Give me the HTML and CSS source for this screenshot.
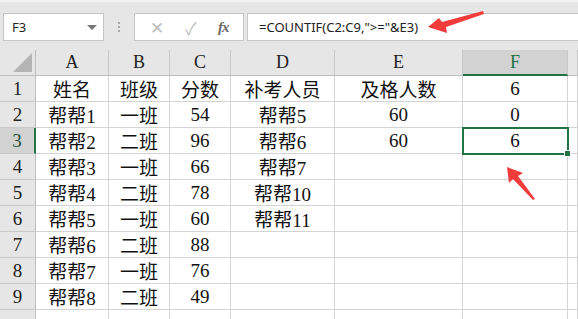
FILE: index.html
```html
<!DOCTYPE html>
<html lang="zh-CN">

<head>
    <meta charset="UTF-8">
    <title>COUNTIF</title>
    <link rel="stylesheet" href="styles.css">
</head>

<body>

    <!-- Barra de fórmulas -->
    <div class="barra">
        <div class="nombre">
            <span>F3</span>
            <span class="flecha"></span>
        </div>
        <div class="puntos"><i></i><i></i><i></i></div>
        <div class="botones">
            <span class="btn-x">✕</span>
            <span class="btn-ok">✓</span>
            <span class="btn-fx">fx</span>
        </div>
        <div class="formula">=COUNTIF(C2:C9,"&gt;="&amp;E3)</div>
    </div>

    <!-- Hoja -->
    <div class="hoja">
        <div class="esquina"><span class="triangulo"></span></div>
        <div class="col">A</div>
        <div class="col">B</div>
        <div class="col">C</div>
        <div class="col">D</div>
        <div class="col">E</div>
        <div class="col activa">F</div>
        <div class="col"></div>

        <div class="fila">1</div>
        <div class="celda">姓名</div><div class="celda">班级</div><div class="celda">分数</div><div class="celda">补考人员</div><div class="celda">及格人数</div><div class="celda">6</div><div class="celda"></div>

        <div class="fila">2</div>
        <div class="celda">帮帮1</div><div class="celda">一班</div><div class="celda">54</div><div class="celda">帮帮5</div><div class="celda">60</div><div class="celda">0</div><div class="celda"></div>

        <div class="fila activa">3</div>
        <div class="celda">帮帮2</div><div class="celda">二班</div><div class="celda">96</div><div class="celda">帮帮6</div><div class="celda">60</div><div class="celda seleccion">6<span class="asa"></span></div><div class="celda"></div>

        <div class="fila">4</div>
        <div class="celda">帮帮3</div><div class="celda">一班</div><div class="celda">66</div><div class="celda">帮帮7</div><div class="celda"></div><div class="celda"></div><div class="celda"></div>

        <div class="fila">5</div>
        <div class="celda">帮帮4</div><div class="celda">二班</div><div class="celda">78</div><div class="celda">帮帮10</div><div class="celda"></div><div class="celda"></div><div class="celda"></div>

        <div class="fila">6</div>
        <div class="celda">帮帮5</div><div class="celda">一班</div><div class="celda">60</div><div class="celda">帮帮11</div><div class="celda"></div><div class="celda"></div><div class="celda"></div>

        <div class="fila">7</div>
        <div class="celda">帮帮6</div><div class="celda">二班</div><div class="celda">88</div><div class="celda"></div><div class="celda"></div><div class="celda"></div><div class="celda"></div>

        <div class="fila">8</div>
        <div class="celda">帮帮7</div><div class="celda">一班</div><div class="celda">76</div><div class="celda"></div><div class="celda"></div><div class="celda"></div><div class="celda"></div>

        <div class="fila">9</div>
        <div class="celda">帮帮8</div><div class="celda">二班</div><div class="celda">49</div><div class="celda"></div><div class="celda"></div><div class="celda"></div><div class="celda"></div>

        <div class="fila ultima"></div>
        <div class="celda ultima"></div><div class="celda ultima"></div><div class="celda ultima"></div><div class="celda ultima"></div><div class="celda ultima"></div><div class="celda ultima"></div><div class="celda ultima"></div>
    </div>

    <!-- Flechas rojas -->
    <svg class="flechas" width="578" height="319" viewBox="0 0 578 319">
        <polygon points="428,27 439,18 442,22 483,11 484,14 446,27 447,33" fill="#f23b3b" />
        <polygon points="507,167 523,173 518,176 535,199 533,200 513,179 509,183" fill="#f23b3b" />
    </svg>

</body>

</html>
```

FILE: styles.css
```css
html {
    overflow: hidden;
}

body {
    margin: 0;
    width: 578px;
    height: 319px;
    overflow: hidden;
    background-color: #fff;
    font-family: "Liberation Serif", "Noto Sans CJK SC", serif;
}

/* Barra de fórmulas */
.barra {
    display: flex;
    align-items: center;
    height: 50px;
    padding: 0 0 0 3px;
    box-sizing: border-box;
    background-color: #e6e6e6;
    border-top: 2px solid #f3f3f3;
    font-family: "Noto Sans", "Liberation Sans", sans-serif;
    color: #222;
}

.nombre {
    display: flex;
    align-items: center;
    justify-content: space-between;
    width: 101px;
    height: 28px;
    margin-top: 2px;
    padding: 0 6px 0 8px;
    box-sizing: border-box;
    background-color: #fff;
    border: 1px solid #c6c6c6;
    font-size: 13px;
}

.flecha {
    width: 0;
    height: 0;
    border-left: 5px solid transparent;
    border-right: 5px solid transparent;
    border-top: 5px solid #777;
}

.puntos {
    display: flex;
    flex-direction: column;
    gap: 2px;
    margin: 2px 14px 0 14px;
}

.puntos i {
    display: block;
    width: 2px;
    height: 2px;
    background-color: #a8a8a8;
}

.botones {
    display: flex;
    align-items: center;
    justify-content: space-around;
    width: 110px;
    height: 28px;
    margin-top: 2px;
    box-sizing: border-box;
    background-color: #fff;
    border: 1px solid #c6c6c6;
    padding: 0 4px;
}

.btn-x,
.btn-ok {
    color: #bdbdbd;
    font-size: 17px;
}

.btn-fx {
    font-family: "Liberation Serif", serif;
    font-style: italic;
    font-weight: bold;
    color: #6a6a6a;
    font-size: 15px;
    letter-spacing: -1px;
}

.formula {
    flex: 1;
    height: 28px;
    margin: 2px 0 0 3px;
    padding: 0 0 0 11px;
    box-sizing: border-box;
    line-height: 26px;
    background-color: #fff;
    border: 1px solid #c6c6c6;
    border-right: none;
    font-size: 13px;
}

/* Hoja */
.hoja {
    display: grid;
    grid-template-columns: 36px 73px 61px 61px 104px 128px 105px 1fr;
    grid-template-rows: 26px repeat(9, 26px) 9px;
    font-size: 19px;
    color: #111;
}

.hoja > div {
    display: flex;
    align-items: center;
    justify-content: center;
    box-sizing: border-box;
    border-right: 1px solid #d4d4d4;
    border-bottom: 1px solid #d4d4d4;
    position: relative;
}

.hoja > .ultima {
    border-bottom: none;
}

.esquina {
    background-color: #e6e6e6;
    border-right-color: #bdbdbd !important;
    border-bottom-color: #bdbdbd !important;
}

.triangulo {
    position: absolute;
    right: 3px;
    bottom: 3px;
    width: 0;
    height: 0;
    border-left: 19px solid transparent;
    border-bottom: 19px solid #b4b4b4;
}

.col {
    background-color: #e6e6e6;
    border-right-color: #c8c8c8 !important;
    border-bottom-color: #bdbdbd !important;
    font-size: 18px;
    color: #222;
}

.fila {
    background-color: #e6e6e6;
    border-right-color: #bdbdbd !important;
    border-bottom-color: #c8c8c8 !important;
    font-size: 19px;
    color: #222;
}

.col.activa {
    background-color: #d2d2d2;
    border-bottom: 2px solid #217346 !important;
    color: #217346;
}

.fila.activa {
    background-color: #d2d2d2;
    border-right: 2px solid #217346 !important;
    color: #1f4e3a;
}

.seleccion {
    outline: 2px solid #217346;
    outline-offset: -1px;
    z-index: 1;
}

.asa {
    position: absolute;
    right: -4px;
    bottom: -4px;
    width: 5px;
    height: 5px;
    background-color: #217346;
    border: 1px solid #fff;
}

.flechas {
    position: absolute;
    left: 0;
    top: 0;
    pointer-events: none;
}
```
